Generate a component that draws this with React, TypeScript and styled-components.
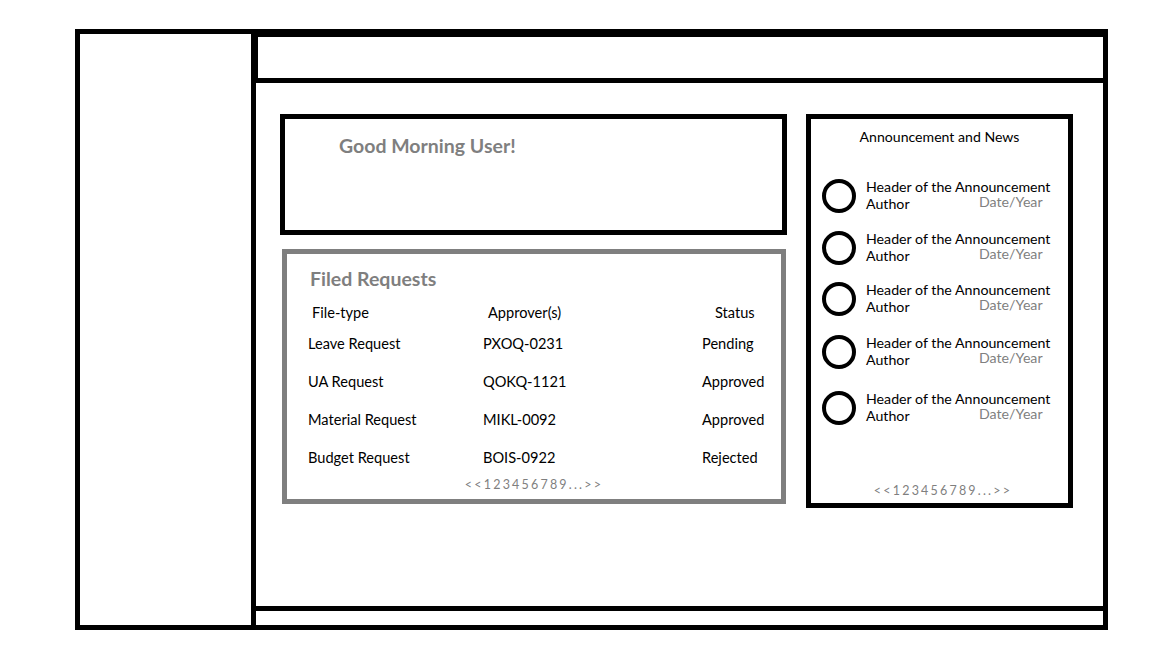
import React from "react";
import styled, { createGlobalStyle } from "styled-components";

const Global = createGlobalStyle`
  html, body { margin: 0; padding: 0; background: #fff; }
  body { font-family: Lato, "Open Sans", sans-serif; color: #000; }
`;

const Frame = styled.div`
  box-sizing: border-box;
  margin: 29px 0 0 75px;
  width: 1033px;
  height: 601px;
  border: 5px solid #000;
  display: grid;
  grid-template-columns: 176px 1fr;
`;

const Sidebar = styled.aside`
  border-right: 5px solid #000;
`;

const Main = styled.div`
  display: flex;
  flex-direction: column;
  min-width: 0;
`;

const Header = styled.header`
  box-sizing: border-box;
  height: 49px;
  border-top: 3px solid #000;
  border-left: 2px solid #000;
  border-bottom: 5px solid #000;
`;

const Body = styled.main`
  flex: 1;
  display: flex;
  gap: 19px;
  padding: 31px 0 0 24px;
  align-items: flex-start;
`;

const Footer = styled.footer`
  height: 14px;
  border-top: 5px solid #000;
`;

const LeftCol = styled.div`
  display: flex;
  flex-direction: column;
  gap: 14px;
  width: 507px;
`;

const GreetingCard = styled.section`
  box-sizing: border-box;
  height: 121px;
  border: 5px solid #000;
  padding: 15px 0 0 54px;
`;

const Title = styled.h2<{ $size?: number; $indent?: number }>`
  margin: 0 0 0 ${(p) => p.$indent ?? 0}px;
  font-size: ${(p) => p.$size ?? 19.5}px;
  font-weight: 700;
  color: #7f7f7f;
  line-height: 24px;
`;

const RequestsCard = styled.section`
  box-sizing: border-box;
  margin-left: 2px;
  width: 504px;
  height: 255px;
  border: 5px solid #7f7f7f;
  padding: 13px 0 0 21px;
`;

const Table = styled.div`
  margin-top: 9px;
  display: grid;
  grid-template-columns: 175px 219px 80px;
`;

const HeadCell = styled.div<{ $offset: number }>`
  height: 31px;
  line-height: 26px;
  font-size: 14.6px;
  padding-left: ${(p) => p.$offset}px;
  white-space: nowrap;
`;

const Cell = styled.div`
  height: 38px;
  line-height: 26px;
  font-size: 14.6px;
  white-space: nowrap;
`;

const Pager = styled.div`
  text-align: center;
  font-size: 12.5px;
  letter-spacing: 2.2px;
  color: #7f7f7f;
`;

const RequestPager = styled(Pager)`
  margin: -6px 0 0 -21px;
`;

const NewsCard = styled.aside`
  box-sizing: border-box;
  width: 267px;
  height: 394px;
  border: 5px solid #000;
  padding: 9px 0 0 11px;
  display: flex;
  flex-direction: column;
`;

const NewsTitle = styled.h3`
  margin: 0 0 0 -11px;
  text-align: center;
  font-size: 14.1px;
  font-weight: 400;
  line-height: 18px;
`;

const NewsItem = styled.div<{ $top: number }>`
  display: flex;
  align-items: flex-start;
  gap: 10px;
  margin-top: ${(p) => p.$top}px;
`;

const Ring = styled.div`
  box-sizing: border-box;
  width: 34px;
  height: 34px;
  margin-top: 1px;
  border-radius: 50%;
  border: 4px solid #000;
  flex: none;
`;

const ItemText = styled.div`
  display: flex;
  flex-direction: column;
  font-size: 14.2px;
  line-height: 17px;
  white-space: nowrap;
`;

const ItemMeta = styled.div`
  display: grid;
  grid-template-columns: 113px auto;
  align-items: start;
`;

const DateText = styled.span`
  color: #808080;
  margin-top: -2px;
`;

const NewsPager = styled(Pager)`
  margin: auto 0 5px -4px;
`;

const requests = [
  ["Leave Request", "PXOQ-0231", "Pending"],
  ["UA Request", "QOKQ-1121", "Approved"],
  ["Material Request", "MIKL-0092", "Approved"],
  ["Budget Request", "BOIS-0922", "Rejected"],
];

const newsTops = [32, 17, 16, 18, 21];

export default function App() {
  return (
    <>
      <Global />
      <Frame>
        <Sidebar />
        <Main>
          <Header />
          <Body>
            <LeftCol>
              <GreetingCard>
                <Title>Good Morning User!</Title>
              </GreetingCard>
              <RequestsCard>
                <Title $indent={2}>Filed Requests</Title>
                <Table>
                  <HeadCell $offset={4}>File-type</HeadCell>
                  <HeadCell $offset={5}>Approver(s)</HeadCell>
                  <HeadCell $offset={13}>Status</HeadCell>
                  {requests.map((r) =>
                    r.map((c, i) => <Cell key={r[0] + i}>{c}</Cell>)
                  )}
                </Table>
                <RequestPager>{"<<123456789...>>"}</RequestPager>
              </RequestsCard>
            </LeftCol>
            <NewsCard>
              <NewsTitle>Announcement and News</NewsTitle>
              {newsTops.map((t, i) => (
                <NewsItem key={i} $top={t}>
                  <Ring />
                  <ItemText>
                    <span>Header of the Announcement</span>
                    <ItemMeta>
                      <span>Author</span>
                      <DateText>Date/Year</DateText>
                    </ItemMeta>
                  </ItemText>
                </NewsItem>
              ))}
              <NewsPager>{"<<123456789...>>"}</NewsPager>
            </NewsCard>
          </Body>
          <Footer />
        </Main>
      </Frame>
    </>
  );
}
